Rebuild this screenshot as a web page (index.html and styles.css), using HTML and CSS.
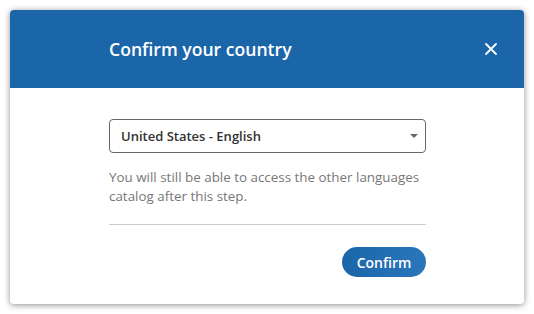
FILE: index.html
```html
<!DOCTYPE html>
<html>
<head>
<meta charset="utf-8">
<link rel="stylesheet" href="styles.css">
</head>
<body>
<div class="modal">
  <div class="modal-header">
    <h2 class="title">Confirm your country</h2>
    <button class="close" aria-label="Close">
      <svg width="12" height="12" viewBox="0 0 12 12"><path d="M1 1 L11 11 M11 1 L1 11" stroke="#fff" stroke-width="1.8" stroke-linecap="round"/></svg>
    </button>
  </div>
  <div class="modal-body">
    <div class="select">
      <span class="select-value">United States - English</span>
      <span class="caret"></span>
    </div>
    <p class="help">You will still be able to access the other languages catalog after this step.</p>
    <hr class="divider">
    <div class="actions">
      <button class="confirm">Confirm</button>
    </div>
  </div>
</div>
</body>
</html>
```
FILE: styles.css
```css
html, body {
  margin: 0;
  padding: 0;
  background: #fff;
}
body {
  padding: 10px;
  font-family: "Open Sans", "Noto Sans", sans-serif;
}
.modal {
  width: 514px;
  height: 294px;
  box-sizing: border-box;
  background: #fff;
  border-radius: 4px;
  box-shadow: 0 1px 6px rgba(0,0,0,0.45);
  overflow: hidden;
  display: flex;
  flex-direction: column;
}
.modal-header {
  height: 78px;
  background: #1b66a9;
  display: flex;
  align-items: center;
  justify-content: space-between;
  padding: 0 27px 0 99px;
}
.title {
  margin: 0;
  color: #fff;
  font-size: 17.6px;
  font-weight: 600;
}
.close {
  background: none;
  border: 0;
  padding: 0;
  width: 12px;
  height: 12px;
  display: flex;
}
.modal-body {
  padding: 31px 98px 0 99px;
  display: flex;
  flex-direction: column;
}
.select {
  height: 34px;
  box-sizing: border-box;
  border: 1px solid #666;
  border-radius: 4px;
  display: flex;
  align-items: center;
  justify-content: space-between;
  padding: 0 7px 0 11px;
}
.select-value {
  font-size: 13px;
  font-weight: 600;
  color: #333;
}
.caret {
  width: 0;
  height: 0;
  border-left: 4px solid transparent;
  border-right: 4px solid transparent;
  border-top: 4px solid #666;
}
.help {
  margin: 15px 0 0;
  font-size: 13.4px;
  line-height: 18.5px;
  color: #777;
}
.divider {
  margin: 19px 0 0;
  border: 0;
  border-top: 1px solid #ccc;
}
.actions {
  display: flex;
  justify-content: flex-end;
  margin-top: 22px;
}
.confirm {
  width: 84px;
  height: 30px;
  border: 0;
  border-radius: 15px;
  background: linear-gradient(90deg, #1b66a9, #2a76ba);
  color: #fff;
  font-family: "Open Sans", "Noto Sans", sans-serif;
  font-size: 14px;
  font-weight: 600;
  padding: 0;
}
```
